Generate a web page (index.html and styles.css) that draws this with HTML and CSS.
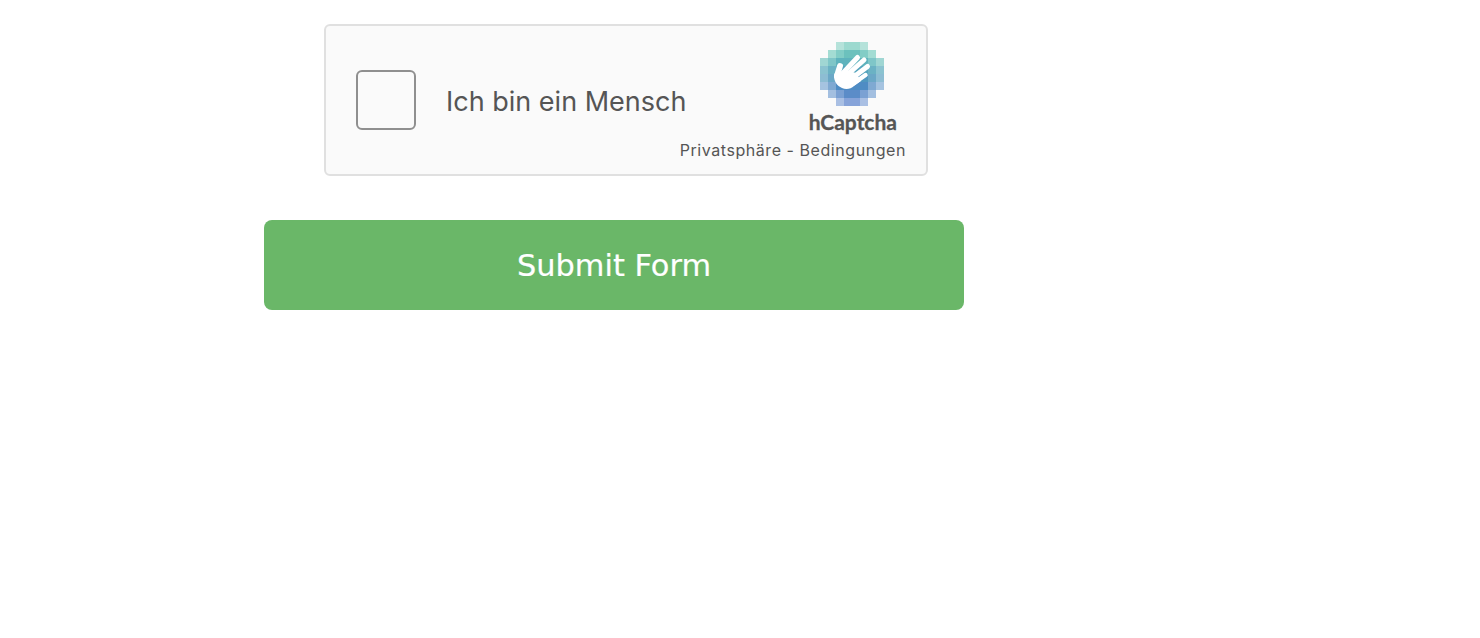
FILE: index.html
```html
<!DOCTYPE html>
<html lang="de">
<head>
<meta charset="utf-8">
<title>Submit Form</title>
<link rel="stylesheet" href="styles.css">
</head>
<body>
<form class="form">
  <div class="captcha">
    <div class="captcha-main">
      <span class="checkbox"></span>
      <span class="captcha-label">Ich bin ein Mensch</span>
    </div>
    <div class="captcha-side">
      <svg class="logo" width="64" height="64" viewBox="0 0 64 64" aria-hidden="true">
        <g shape-rendering="crispEdges">
          <rect x="16" y="0" width="8" height="8" fill="#b5e2da"/><rect x="24" y="0" width="16" height="8" fill="#9cd9cf"/><rect x="40" y="0" width="8" height="8" fill="#b5e2da"/>
          <rect x="8" y="8" width="8" height="8" fill="#a3dcd3"/><rect x="16" y="8" width="8" height="8" fill="#82cdc6"/><rect x="24" y="8" width="16" height="8" fill="#6cc1bd"/><rect x="40" y="8" width="8" height="8" fill="#82cdc6"/><rect x="48" y="8" width="8" height="8" fill="#a3dcd3"/>
          <rect x="0" y="16" width="8" height="8" fill="#a0d6d3"/><rect x="8" y="16" width="8" height="8" fill="#7fc6c8"/><rect x="16" y="16" width="32" height="8" fill="#5fb3bd"/><rect x="48" y="16" width="8" height="8" fill="#7fc6c8"/><rect x="56" y="16" width="8" height="8" fill="#a0d6d3"/>
          <rect x="0" y="24" width="8" height="8" fill="#8bc3d0"/><rect x="8" y="24" width="8" height="8" fill="#6bb2c4"/><rect x="16" y="24" width="32" height="8" fill="#55a4bd"/><rect x="48" y="24" width="8" height="8" fill="#6bb2c4"/><rect x="56" y="24" width="8" height="8" fill="#8bc3d0"/>
          <rect x="0" y="32" width="8" height="8" fill="#8dbdd3"/><rect x="8" y="32" width="8" height="8" fill="#6ba8c7"/><rect x="16" y="32" width="32" height="8" fill="#4f97bf"/><rect x="48" y="32" width="8" height="8" fill="#6ba8c7"/><rect x="56" y="32" width="8" height="8" fill="#8dbdd3"/>
          <rect x="0" y="40" width="8" height="8" fill="#a5c3e0"/><rect x="8" y="40" width="8" height="8" fill="#7fa9d2"/><rect x="16" y="40" width="32" height="8" fill="#4f8cc4"/><rect x="48" y="40" width="8" height="8" fill="#7fa9d2"/><rect x="56" y="40" width="8" height="8" fill="#a5c3e0"/>
          <rect x="8" y="48" width="8" height="8" fill="#a3bfe0"/><rect x="16" y="48" width="8" height="8" fill="#7ba1d3"/><rect x="24" y="48" width="16" height="8" fill="#5b8cc8"/><rect x="40" y="48" width="8" height="8" fill="#7ba1d3"/><rect x="48" y="48" width="8" height="8" fill="#a3bfe0"/>
          <rect x="16" y="56" width="8" height="8" fill="#a9bfe3"/><rect x="24" y="56" width="16" height="8" fill="#86a3d9"/><rect x="40" y="56" width="8" height="8" fill="#a9bfe3"/>
        </g>
        <g stroke="#fff" stroke-linecap="round" fill="none">
          <path stroke-width="5" d="M23 31 37.500 15.500"/>
          <path stroke-width="5" d="M27 33 44 18"/>
          <path stroke-width="5" d="M31 37 47.500 24.500"/>
          <path stroke-width="4.500" d="M34 41 45.500 33"/>
          <path stroke-width="6" d="M17 34 20 24"/>
        </g>
        <path fill="#fff" d="M14 34C14 30 17 30 20 30L26 28 36 31 41 39 34 44C31 47 26 48 22 46 17 44 14 39 14 34Z"/>
      </svg>
      <span class="brand">hCaptcha</span>
      <span class="legal">Privatsphäre - Bedingungen</span>
    </div>
  </div>
  <button class="submit" type="button">Submit Form</button>
</form>
</body>
</html>
```

FILE: styles.css
```css
html, body {
  margin: 0;
  padding: 0;
  background: #fff;
}

body {
  height: 638px;
  overflow: hidden;
}

.form {
  width: 700px;
  margin-left: 264px;
  padding-top: 24px;
  display: flex;
  flex-direction: column;
}

.captcha {
  box-sizing: border-box;
  width: 604px;
  height: 152px;
  margin-left: 60px;
  margin-bottom: 44px;
  background: #fafafa;
  border: 2px solid #e0e0e0;
  border-radius: 6px;
  display: flex;
  color: #555;
  font-family: Inter, "Liberation Sans", sans-serif;
}

.captcha-main {
  flex: 1;
  min-width: 0;
  display: flex;
  align-items: center;
  padding-left: 30px;
  gap: 30px;
  height: 148px;
}

.checkbox {
  flex: none;
  box-sizing: border-box;
  width: 60px;
  height: 60px;
  background: #fafafa;
  border: 2px solid #8f8f8f;
  border-radius: 6px;
}

.captcha-label {
  font-size: 27px;
  line-height: 32px;
  white-space: nowrap;
  position: relative;
  top: 2px;
}

.captcha-side {
  flex: none;
  display: flex;
  flex-direction: column;
  align-items: flex-end;
  padding: 16px 20px 0 0;
}

.logo {
  display: block;
  flex: none;
  margin-right: 22px;
}

.brand {
  font-family: Lato, "Open Sans", sans-serif;
  font-weight: 700;
  font-size: 21px;
  line-height: 26px;
  margin-top: 3px;
  margin-right: 9px;
  color: #555;
  -webkit-text-stroke: 0.3px #555;
}

.legal {
  font-size: 16px;
  line-height: 20px;
  letter-spacing: 0.56px;
  white-space: nowrap;
  margin-top: 5px;
}

.submit {
  width: 700px;
  height: 90px;
  padding: 0;
  border: 0;
  border-radius: 8px;
  background: #6ab768;
  color: #fff;
  font-family: "DejaVu Sans", Verdana, sans-serif;
  font-size: 30.400px;
  -webkit-text-stroke: 0.2px #fff;
}
```
